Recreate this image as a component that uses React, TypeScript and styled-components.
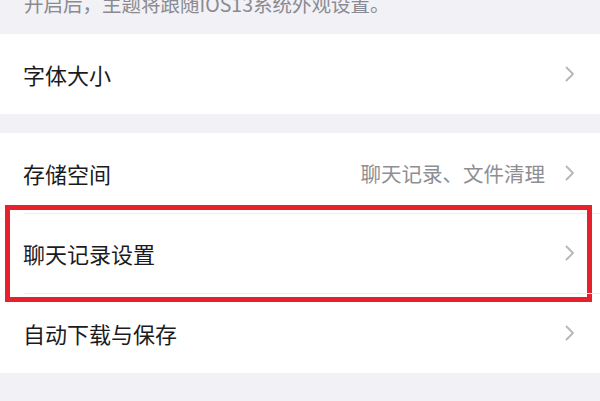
import styled, { createGlobalStyle } from "styled-components";

const GlobalStyle = createGlobalStyle`
    html, body {
        margin: 0;
        padding: 0;
        background: #f1f1f6;
    }
    body {
        font-family: "Noto Sans CJK SC", "Noto Sans", sans-serif;
        -webkit-font-smoothing: antialiased;
    }
`;

const Page = styled.div`
    width: 600px;
    height: 401px;
    overflow: hidden;
    background: #f1f1f6;
`;

// the footnote under the theme switch, cut off at the top of the shot
const Caption = styled.div`
    height: 34px;
    overflow: hidden;
    padding: 0 24px;
    box-sizing: border-box;
`;

const CaptionText = styled.p`
    margin: -9px 0 0;
    font-size: 19.5px;
    line-height: 26px;
    color: #8a8a90;
    white-space: nowrap;
`;

const Group = styled.section<{ $gap?: boolean }>`
    background: #fff;
    margin-top: ${({ $gap }) => ($gap ? "19px" : "0")};
`;

const Row = styled.div<{ $first?: boolean }>`
    position: relative;
    height: 80px;
    display: flex;
    align-items: center;
    padding: 0 25px 0 23px;

    /* hairline between rows, inset from the left */
    &::before {
        content: "";
        display: ${({ $first }) => ($first ? "none" : "block")};
        position: absolute;
        top: 0;
        left: 24px;
        right: 0;
        height: 1px;
        background: #ededf0;
    }
`;

const Label = styled.span`
    flex: 1;
    font-size: 22px;
    color: #1b1b1d;
`;

const Detail = styled.span`
    font-size: 20.5px;
    color: #8e8e93;
    margin-right: 20px;
`;

// red annotation frame drawn over the chat history row
const Highlight = styled.div`
    position: absolute;
    top: -8px;
    bottom: -9px;
    left: 5px;
    right: 8px;
    border: 5px solid #e6202c;
    pointer-events: none;
`;

const Chevron = () => (
    <svg width="10" height="16" viewBox="0 0 10 16" fill="none">
        <path d="M1.5 1.5L8 8L1.5 14.5" stroke="#b6b6bb" strokeWidth="1.8" strokeLinecap="round" strokeLinejoin="round" />
    </svg>
);

type Item = { label: string; detail?: string; marked?: boolean };

const storageItems: Item[] = [
    { label: "存储空间", detail: "聊天记录、文件清理" },
    { label: "聊天记录设置", marked: true },
    { label: "自动下载与保存" },
];

export default function App() {
    return (
        <Page>
            <GlobalStyle />
            <Caption>
                <CaptionText>开启后，主题将跟随IOS13系统外观设置。</CaptionText>
            </Caption>

            <Group>
                <Row $first>
                    <Label>字体大小</Label>
                    <Chevron />
                </Row>
            </Group>

            <Group $gap>
                {storageItems.map((item, i) => (
                    <Row key={item.label} $first={i === 0}>
                        <Label>{item.label}</Label>
                        {item.detail && <Detail>{item.detail}</Detail>}
                        <Chevron />
                        {item.marked && <Highlight />}
                    </Row>
                ))}
            </Group>
        </Page>
    );
}
